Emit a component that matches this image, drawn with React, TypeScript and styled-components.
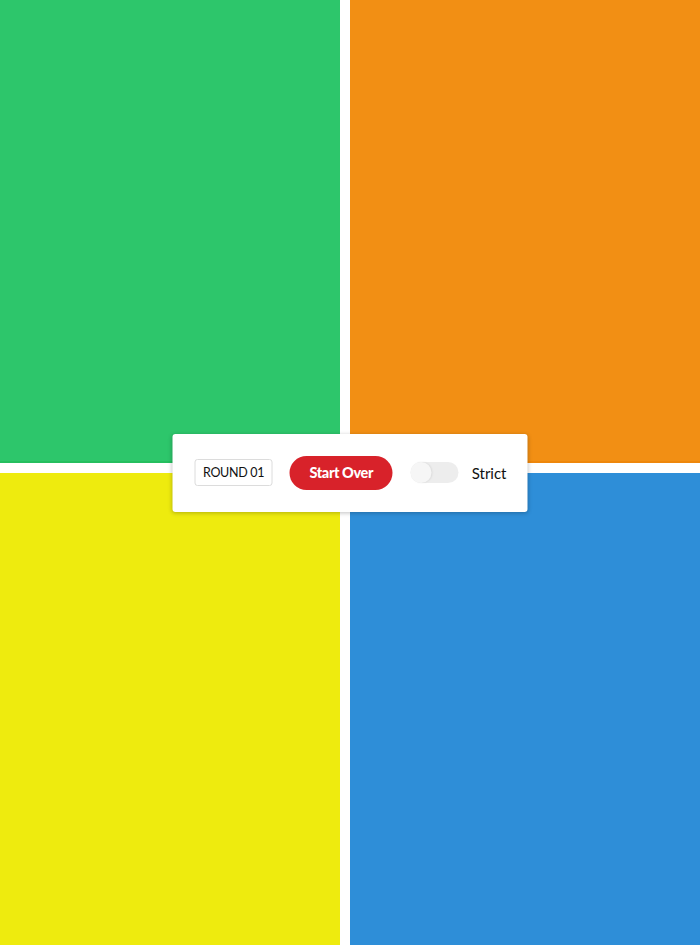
import React, { useState } from "react";
import styled, { createGlobalStyle } from "styled-components";

const GlobalStyle = createGlobalStyle`
  html, body {
    margin: 0;
    padding: 0;
    background: #ffffff;
    font-family: Lato, "Liberation Sans", sans-serif;
  }
`;

const Board = styled.div`
  position: relative;
  width: 700px;
  height: 945px;
  display: grid;
  grid-template-columns: 340px 350px;
  grid-template-rows: 463px 472px;
  gap: 10px;
  overflow: hidden;
`;

const Pad = styled.div<{ $color: string; $edge: string }>`
  background: ${({ $color }) => $color};
  box-shadow: inset 0 -2px 0 ${({ $edge }) => $edge};
`;

const Panel = styled.div`
  position: absolute;
  left: 50%;
  top: 50%;
  transform: translate(-50%, -50%);
  width: 355px;
  height: 78px;
  box-sizing: border-box;
  padding: 0 21px 0 22px;
  display: flex;
  align-items: center;
  background: #ffffff;
  border-radius: 3px;
  box-shadow: 0 1px 4px rgba(0, 0, 0, 0.25);
`;

const RoundBox = styled.div`
  width: 79px;
  height: 27px;
  box-sizing: border-box;
  border: 1px solid #dcdcdc;
  border-radius: 3px;
  display: flex;
  align-items: center;
  justify-content: center;
  font-size: 12.5px;
  color: #111;
  letter-spacing: -0.3px;
`;

const StartButton = styled.button`
  margin-left: 17px;
  width: 104px;
  height: 34px;
  border: none;
  border-radius: 17px;
  background: #d8222a;
  color: #fff;
  font-family: Lato, "Liberation Sans", sans-serif;
  font-weight: 900;
  font-size: 14.5px;
  letter-spacing: -0.4px;
  cursor: pointer;
  padding: 0;
`;

const StrictLabel = styled.label`
  margin-left: 18px;
  display: flex;
  align-items: center;
  gap: 13px;
  font-size: 15px;
  color: #111;
  cursor: pointer;
`;

const Track = styled.span<{ $on: boolean }>`
  position: relative;
  width: 48px;
  height: 21px;
  border-radius: 11px;
  background: ${({ $on }) => ($on ? "#d8222a" : "#ededed")};
`;

const Knob = styled.span<{ $on: boolean }>`
  position: absolute;
  top: 0;
  left: ${({ $on }) => ($on ? "27px" : "0")};
  width: 21px;
  height: 21px;
  border-radius: 50%;
  background: #f6f6f6;
  box-shadow: 1px 0 2px rgba(0, 0, 0, 0.08);
`;

const App = () => {
  const [strict, setStrict] = useState(false);

  return (
    <>
      <GlobalStyle />
      <Board>
        <Pad $color="#2dc66b" $edge="#25bf5f" />
        <Pad $color="#f28f14" $edge="#ee870c" />
        <Pad $color="#eeeb0e" $edge="#eeeb0e" />
        <Pad $color="#2e8ed8" $edge="#2e8ed8" />
        <Panel>
          <RoundBox>ROUND 01</RoundBox>
          <StartButton>Start Over</StartButton>
          <StrictLabel onClick={() => setStrict(!strict)}>
            <Track $on={strict}>
              <Knob $on={strict} />
            </Track>
            Strict
          </StrictLabel>
        </Panel>
      </Board>
    </>
  );
};

export default App;
